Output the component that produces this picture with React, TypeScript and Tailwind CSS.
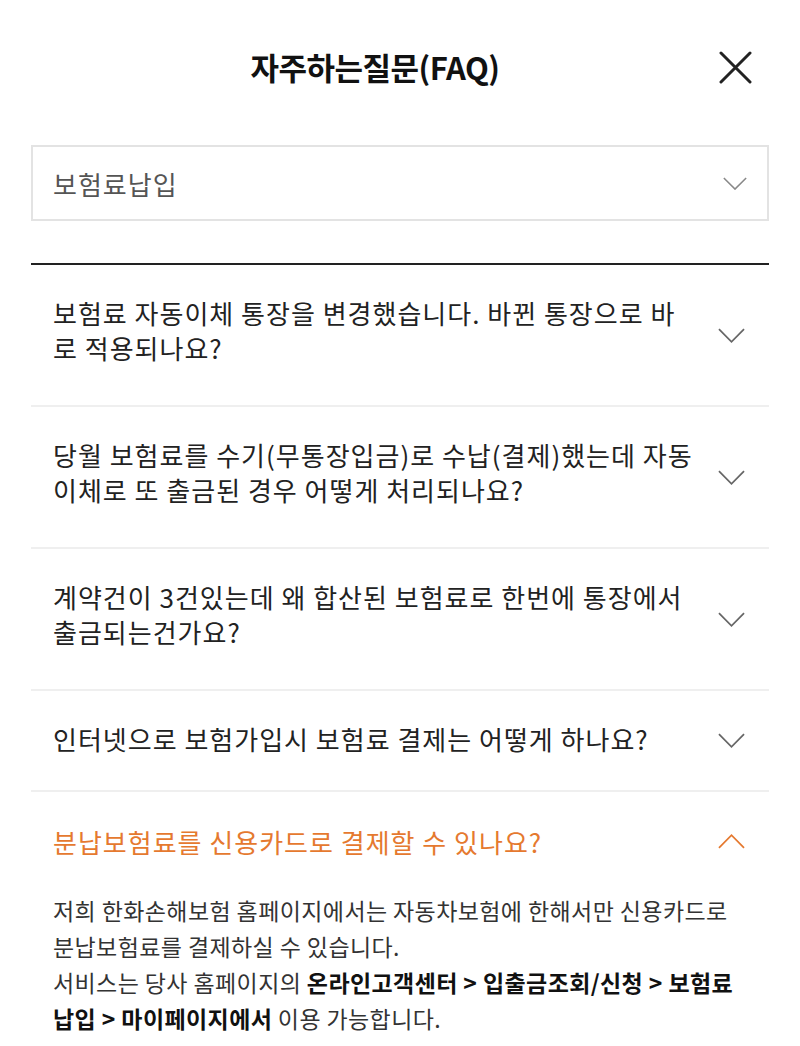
import { useState } from 'react';

type Faq = {
  q: string[];
  a?: React.ReactNode;
};

const faqs: Faq[] = [
  { q: ['보험료 자동이체 통장을 변경했습니다. 바뀐 통장으로 바', '로 적용되나요?'] },
  { q: ['당월 보험료를 수기(무통장입금)로 수납(결제)했는데 자동', '이체로 또 출금된 경우 어떻게 처리되나요?'] },
  { q: ['계약건이 3건있는데 왜 합산된 보험료로 한번에 통장에서', '출금되는건가요?'] },
  { q: ['인터넷으로 보험가입시 보험료 결제는 어떻게 하나요?'] },
  {
    q: ['분납보험료를 신용카드로 결제할 수 있나요?'],
    a: (
      <>
        저희 한화손해보험 홈페이지에서는 자동차보험에 한해서만 신용카드로
        <br />
        분납보험료를 결제하실 수 있습니다.
        <br />
        서비스는 당사 홈페이지의 <b className="font-bold text-[#111]">온라인고객센터 &gt; 입출금조회/신청 &gt; 보험료</b>
        <br />
        <b className="font-bold text-[#111]">납입 &gt; 마이페이지에서</b> 이용 가능합니다.
      </>
    ),
  },
];

function Chevron({ up, className }: { up?: boolean; className?: string }) {
  return (
    <svg viewBox="0 0 28 15" className={className} fill="none">
      <polyline
        points={up ? '1,14 14,1 27,14' : '1,1 14,14 27,1'}
        stroke="currentColor"
        strokeWidth="1.8"
      />
    </svg>
  );
}

export default function App() {
  const [open, setOpen] = useState(4);

  return (
    <div className="min-h-[1046px] bg-white px-[31px] font-['Noto_Sans_CJK_KR',sans-serif]">
      {/* Header */}
      <header className="flex h-[134px] items-center">
        <h1 className="flex-1 text-center text-[31px] font-bold tracking-[-0.5px] text-[#111]">
          자주하는질문(FAQ)
        </h1>
        <button aria-label="닫기" className="mr-[17px] h-[33px] w-[33px] text-[#222]">
          <svg viewBox="0 0 33 33" className="h-[33px] w-[33px]">
            <path d="M2 2L31 31M31 2L2 31" stroke="currentColor" strokeWidth="3" strokeLinecap="round" />
          </svg>
        </button>
      </header>

      {/* Category select */}
      <div className="mt-[11px] flex h-[76px] items-center justify-between border-2 border-[#e3e3e3] pl-[20px] pr-[20px]">
        <span className="text-[26px] tracking-[1px] text-[#555]">보험료납입</span>
        <Chevron className="h-[13px] w-[24px] text-[#888]" />
      </div>

      <div className="mt-[42px] h-[2px] bg-[#222]" />

      {/* FAQ list */}
      <ul>
        {faqs.map((f, i) => {
          const isOpen = open === i;
          const single = f.q.length === 1;
          return (
            <li key={i} className={isOpen ? '' : 'border-b-2 border-[#efefef]'}>
              <button
                onClick={() => setOpen(isOpen ? -1 : i)}
                className="flex w-full items-center justify-between pl-[22px] pr-[24px] text-left"
              >
                <span
                  className={`text-[26px] leading-[35px] tracking-[1px] ${
                    isOpen ? 'pt-[32px] pb-[16px] text-[#e5792f]' : 'text-[#222]'
                  } ${!isOpen && single ? 'pt-[30px] pb-[34px]' : ''} ${!isOpen && !single ? 'pt-[30px] pb-[40px]' : ''}`}
                >
                  {f.q.map((line, j) => (
                    <span key={j} className="block">
                      {line}
                    </span>
                  ))}
                </span>
                <Chevron
                  up={isOpen}
                  className={`h-[15px] w-[27px] shrink-0 ${isOpen ? 'mt-[16px] text-[#e5792f]' : 'text-[#666]'}`}
                />
              </button>
              {isOpen && f.a && (
                <p className="px-[22px] pt-[17px] pb-[30px] text-[23px] leading-[36px] tracking-[0.4px] text-[#333]">
                  {f.a}
                </p>
              )}
            </li>
          );
        })}
      </ul>
    </div>
  );
}
